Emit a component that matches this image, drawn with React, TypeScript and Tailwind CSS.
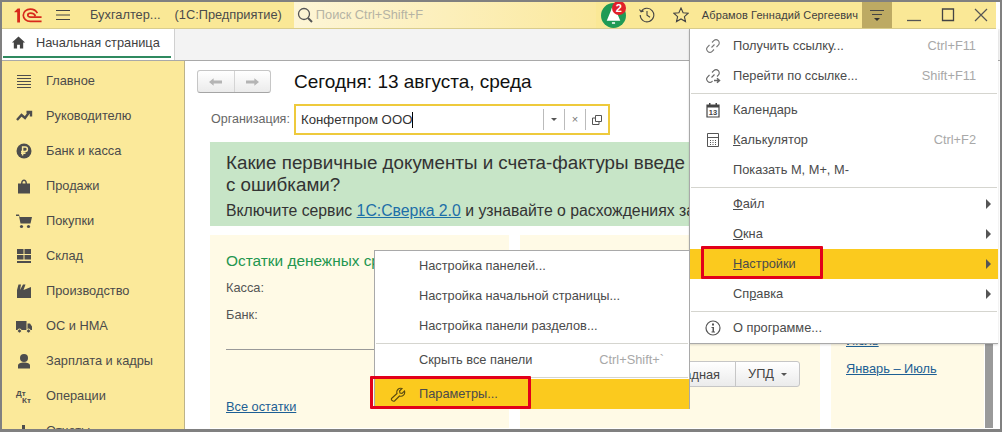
import type { ReactNode } from "react";

const sections = [
  "Главное",
  "Руководителю",
  "Банк и касса",
  "Продажи",
  "Покупки",
  "Склад",
  "Производство",
  "ОС и НМА",
  "Зарплата и кадры",
  "Операции",
  "Отчеты",
];

function SectionIcon({ index }: { index: number }) {
  const c = "#4d4d4d";
  const icons: ReactNode[] = [
    <g stroke={c} strokeWidth="1" fill="none">
      <path d="M1 2.500h14M1 5.500h14M1 8.500h14M1 11.500h14M1 14.500h14" />
    </g>,
    <path d="M1 12l4.500-5 3.500 3 4-5.500M10.500 4h4.500v4.500" stroke={c} strokeWidth="2.400" fill="none" />,
    <g>
      <circle cx="8" cy="8" r="7.500" fill={c} />
      <path d="M6.600 12.500V4h2.600a2.100 2.100 0 010 4.400H5M5 10.300h4.500" stroke="#fbe99a" strokeWidth="1.500" fill="none" />
    </g>,
    <path d="M2 5.500h3c0-5.500 6-5.500 6 0h3v10H2zM6.500 5.500h3c0-3.200-3-3.200-3 0z" fill={c} fillRule="evenodd" />,
    <g fill={c}>
      <path d="M0 1.500h3l.7 2.500H16l-1.500 6.500H4.500L3 3H0z" />
      <circle cx="5.500" cy="13.500" r="1.600" />
      <circle cx="12.500" cy="13.500" r="1.600" />
    </g>,
    <g fill={c}>
      <path d="M1 1h6.500v5H1zM8.500 1H15v5H8.500zM1 7h6.500v4.500H1zM8.500 7H15v4.500H8.500zM1 13h14v2H1z" />
    </g>,
    <path d="M1 15V7l1.500-5.500H5L4 7l3-5.500h2.500L7.500 7 15 4v11z" fill={c} />,
    <g fill={c}>
      <path d="M0 3h10.500v9H0zM11.500 5.500H14l2 3V12h-4.500z" />
      <circle cx="3.500" cy="13" r="2" stroke="#fbe99a" />
      <circle cx="12.500" cy="13" r="2" stroke="#fbe99a" />
    </g>,
    <g fill={c}>
      <circle cx="8" cy="5" r="4" />
      <path d="M2 15.500v-3c0-2 2.500-3 6-3s6 1 6 3v3z" />
    </g>,
    <g fill={c} fontFamily="'Liberation Sans', sans-serif" fontSize="8" fontWeight="700">
      <text x="0" y="8">Дт</text>
      <text x="6" y="15">Кт</text>
    </g>,
    <path d="M1 15V8h3v7zM6 15V2h3v13zM11 15V6h3v9z" fill={c} />,
  ];
  return (
    <svg viewBox="0 0 16 16" className="w-4 h-4 shrink-0 overflow-visible">
      {icons[index]}
    </svg>
  );
}

function Row({
  icon,
  label,
  hint,
  arrow,
  active,
  pad,
}: {
  icon?: ReactNode;
  label: ReactNode;
  hint?: string;
  arrow?: boolean;
  active?: boolean;
  pad: string;
}) {
  return (
    <div className={`relative h-[30px] flex items-center ${pad} ${active ? "bg-[#fbca1e]" : ""}`}>
      {icon && <span className="absolute left-[15px] top-[7px] w-4 h-4">{icon}</span>}
      <span className="text-[#4b4b4b]">{label}</span>
      {hint && <span className="ml-auto text-[#a8a8a8]">{hint}</span>}
      {arrow && <span className="absolute right-[7px] top-[10px] w-0 h-0 border-y-[5px] border-y-transparent border-l-[5px] border-l-[#555]" />}
    </div>
  );
}

const Sep = () => <div className="h-[1px] mx-[1px] my-[1.5px] bg-[#d5d5cf]" />;

export default function App() {
  return (
    <div className="relative w-[1002px] h-[432px] overflow-hidden border-2 border-b-[3px] border-[#808080] bg-white text-[12.8px] flex flex-col font-['Liberation_Sans',Arial,sans-serif]">
      {/* top bar */}
      <div className="h-[27px] mr-[4px] shrink-0 flex items-center bg-[#fae896] border-b border-[#d9cd8e] text-[#4b4b4b]">
        <svg viewBox="0 0 30 16" className="w-[29px] h-[15px] ml-[11px] shrink-0">
          <path d="M1 4l3.500-3.500h2.500v15H4V4.500H1z" fill="#d8291c" />
          <path d="M25.500 5.500C24 2.500 21 1.200 18 1.200c-4.200 0-7.500 2.700-7.500 6.400s3.300 6.600 7.500 6.600h12" stroke="#d8291c" strokeWidth="1.800" fill="none" />
          <path d="M23.500 8.500c-1-1.800-3-3-5-3-1.700 0-3.200 .8-3.200 2.100s1.500 2.100 3.200 2.100h11.500" stroke="#d8291c" strokeWidth="1.800" fill="none" />
        </svg>
        <svg viewBox="0 0 14 12" className="w-[14px] h-[12px] ml-[14px] shrink-0" fill="none">
          <path d="M0 1.500h14M0 6h14M0 10.500h14" stroke="#444" />
        </svg>
        <span className="ml-[20px]">Бухгалтер...</span>
        <span className="ml-[14px]">(1С:Предприятие)</span>
        <div className="ml-[12px] w-[302px] h-[26px] flex items-center bg-gradient-to-r from-[#fdf5d6] to-[#fbe99e]">
          <svg viewBox="0 0 16 16" className="w-4 h-4 ml-[3px] shrink-0" fill="none" stroke="#555" strokeWidth="1.300">
            <circle cx="7" cy="7" r="5.500" />
            <path d="M11 11l4 4" strokeWidth="2" />
          </svg>
          <span className="ml-[3px] text-[#b5b3a4]">Поиск Ctrl+Shift+F</span>
        </div>
        <div className="relative ml-[5px] w-[25px] h-[25px] rounded-full bg-[#1f9a55] shrink-0">
          <svg viewBox="0 0 24 24" className="w-[25px] h-[25px]">
            <path d="M12 4c-1.500 0-2 1-2.300 3L5.500 17h13L14.300 7C14 5 13.500 4 12 4zM10.500 18.500h3V20h-3z" fill="#fff" />
          </svg>
          <span className="absolute -top-[2px] left-[11px] w-[14px] h-[14px] rounded-full bg-[#e0202a] text-white text-[11px] font-bold leading-[14px] text-center">2</span>
        </div>
        <svg viewBox="0 0 16 16" className="w-4 h-4 ml-[13px] shrink-0" fill="none" stroke="#444" strokeWidth="1.100">
          <path d="M2.200 4.500A6.800 6.800 0 111.200 8M.5 2.500l1.600 2.300 2.600-.8M8 4v4.300l3 2" />
        </svg>
        <svg viewBox="0 0 16 16" className="w-4 h-4 ml-[18px] shrink-0" fill="none" stroke="#444" strokeWidth="1.100">
          <path d="M8 1l2.100 4.700 5.100.5-3.800 3.400 1.100 5L8 12l-4.500 2.600 1.100-5L.8 6.200l5.100-.5z" />
        </svg>
        <span className="ml-[13px] w-[155px] shrink-0 text-[11px] tracking-[0.1px] text-[#3f3f3f] whitespace-nowrap">Абрамов Геннадий Сергеевич</span>
        <div className="ml-[5px] w-[30px] h-[26px] bg-[#bdaa63] flex items-center justify-center shrink-0">
          <svg viewBox="0 0 16 16" className="w-4 h-4">
            <path d="M1 3.500h14M3 7.500h10" stroke="#444" />
            <path d="M5 11h6l-3 3z" fill="#333" />
          </svg>
        </div>
        <svg viewBox="0 0 16 16" className="w-4 h-4 ml-[14px] shrink-0"><path d="M1 13.500h14" stroke="#555" strokeWidth="1.300" /></svg>
        <svg viewBox="0 0 16 16" className="w-4 h-4 ml-[18px] shrink-0"><path d="M2.500 2h11v11.500h-11z" stroke="#444" strokeWidth="1.300" fill="none" /></svg>
        <svg viewBox="0 0 16 16" className="w-4 h-4 ml-[17px] shrink-0"><path d="M2 2l12 12M14 2L2 14" stroke="#555" strokeWidth="1.200" /></svg>
      </div>

      {/* tabs */}
      <div className="h-[32px] shrink-0 flex bg-[#f3f3f3] border-b border-[#a9a9a9]">
        <div className="w-[173px] h-[31px] bg-white border-r border-[#d0d0d0] flex items-center pb-[4px] relative text-[#3f3f3f]">
          <svg viewBox="0 0 16 16" className="w-[15px] h-[15px] ml-[9px] shrink-0">
            <path d="M8 1.500L1 8h2v6.500h3.500v-4h3v4H13V8h2z" fill="#444" />
          </svg>
          <span className="ml-[10px]">Начальная страница</span>
          <span className="absolute left-[1px] right-[3px] bottom-[2px] h-[2px] bg-[#2f8a60]" />
        </div>
      </div>

      {/* body */}
      <div className="flex-1 flex min-h-0">
        <div className="w-[183px] shrink-0 bg-[#fbe99a] border-r border-[#bdb38a] overflow-hidden pt-[2px]">
          {sections.map((s, i) => (
            <div key={s} className="h-[35px] flex items-center pl-[14px] text-[#4b4b4b]">
              <SectionIcon index={i} />
              <span className="ml-[14px]">{s}</span>
            </div>
          ))}
        </div>

        <div className="flex-1 min-w-0 overflow-hidden pl-[12px] pt-[9px]">
          <div className="flex items-center h-[23px]">
            <div className="w-[74px] h-[23px] flex rounded-[3px] border border-[#c6c6c6] border-b-[#a5a5a5] bg-gradient-to-b from-white to-[#ebebeb]">
              <div className="flex-1 flex items-center justify-center border-r border-[#d4d4d4]">
                <svg viewBox="0 0 14 10" className="w-[13px] h-[10px]"><path d="M0 5l5-4v2.500h9v3H5V9z" fill="#b4b4b4" /></svg>
              </div>
              <div className="flex-1 flex items-center justify-center">
                <svg viewBox="0 0 14 10" className="w-[13px] h-[10px]"><path d="M14 5L9 1v2.500H0v3h9V9z" fill="#b4b4b4" /></svg>
              </div>
            </div>
            <span className="ml-[23px] text-[19px] text-[#111] relative top-[1px]">Сегодня: 13 августа, среда</span>
          </div>
          <div className="flex items-center mt-[11px] pl-[14px] h-[31px]">
            <span className="text-[#666] w-[83px] shrink-0 text-[12.500px]">Организация:</span>
            <div className="w-[316px] h-[31px] border-2 border-[#eeca3c] flex items-center text-[#333] text-[13.200px]">
              <span className="pl-[5px]">Конфетпром ООО</span>
              <span className="w-[1px] h-[16px] bg-black" />
              <div className="ml-auto flex h-[21px] text-[#777]">
                <div className="w-[21px] border-l border-[#bbb] flex items-center justify-center">
                  <span className="w-0 h-0 border-x-[3px] border-x-transparent border-t-[3px] border-t-[#555]" />
                </div>
                <div className="w-[21px] border-l border-[#bbb] flex items-center justify-center text-[11px]">×</div>
                <div className="w-[23px] border-l border-[#bbb] flex items-center justify-center">
                  <svg viewBox="0 0 10 10" className="w-[10px] h-[10px]" fill="none" stroke="#555">
                    <path d="M3.500.5h6v6h-6zM3.500 3H.5v6.500H7V6.500" />
                  </svg>
                </div>
              </div>
            </div>
          </div>
          <div className="mt-[7px] ml-[13px] w-[479px] h-[84px] overflow-hidden bg-[#c7e5c7] pl-[16px] pt-[10px] text-[#333]">
            <div className="text-[18.800px] leading-[22px] whitespace-nowrap">Какие первичные документы и счета-фактуры введе</div>
            <div className="text-[18.800px] leading-[22px]">с ошибками?</div>
            <div className="text-[15.800px] leading-[20px] mt-[5px] whitespace-nowrap">
              Включите сервис <span className="text-[#1d6fa8] underline">1С:Сверка 2.0</span> и узнавайте о расхождениях за
            </div>
          </div>
          <div className="mt-[9px] ml-[13px] flex gap-[11px] h-[193px]">
            <div className="w-[299px] shrink-0 bg-[#fffae6] pl-[16px] pt-[14px] overflow-hidden">
              <div className="text-[15.400px] text-[#23964f] whitespace-nowrap">Остатки денежных ср</div>
              <div className="mt-[6px] text-[#555]">Касса:</div>
              <div className="mt-[8px] text-[#555]">Банк:</div>
              <div className="mt-[25px] h-[1px] bg-[#999]" />
              <div className="mt-[47px] text-[#1d5f94] underline">Все остатки</div>
            </div>
            <div className="w-[300px] shrink-0 bg-[#fffae6] pt-[126px] flex justify-end pr-[20px]">
              <div className="h-[26px] flex border border-[#c6c6c6] rounded-[3px] bg-gradient-to-b from-white to-[#ebebeb] text-[#444]">
                <span className="pl-[1px] pr-[15px] leading-[26px]">адная</span>
                <span className="px-[12px] leading-[26px] border-l border-[#c6c6c6] flex items-center gap-[7px]">
                  УПД
                  <span className="w-0 h-0 border-x-[3px] border-x-transparent border-t-[3px] border-t-[#555]" />
                </span>
              </div>
            </div>
            <div className="w-[153px] shrink-0 bg-[#fffae6] pl-[15px] pt-[96px] text-[#1d5f94]">
              <div className="underline">Июль</div>
              <div className="underline mt-[9px]">Январь – Июль</div>
            </div>
            <div className="w-[8px] shrink-0 bg-[#9a9a9a] -ml-[10px]" />
          </div>
        </div>
      </div>

      {/* main menu */}
      <div className="absolute left-[687px] top-[27px] w-[309px] h-[315px] bg-white border-l border-b border-[#a9a9a9] pt-[2px] shadow-[0_1px_2px_rgba(0,0,0,0.15)]">
        <Row
          pad="pl-[43px] pr-[22px]"
          label="Получить ссылку..."
          hint="Ctrl+F11"
          icon={
            <svg viewBox="0 0 16 16" fill="none" stroke="#777" strokeWidth="1.100" className="w-4 h-4">
              <path d="M6.500 9.500l3-3M7 4.500l1.800-1.800a3 3 0 014.500 4.500L11.500 9M9 11.500l-1.800 1.800a3 3 0 01-4.500-4.500L4.500 7" />
            </svg>
          }
        />
        <Row
          pad="pl-[43px] pr-[22px]"
          label="Перейти по ссылке..."
          hint="Shift+F11"
          icon={
            <svg viewBox="0 0 16 16" fill="none" stroke="#666" strokeWidth="1.100" className="w-4 h-4">
              <path d="M6.500 9.500l3-3M7 4.500l1.800-1.800a3 3 0 014.500 4.500L12 8.500M7.500 13l-.3.300a3 3 0 01-4.500-4.500L4.500 7" />
              <path d="M9 12.500h5M12 10.200l2.500 2.300-2.500 2.300" strokeWidth="1.500" />
            </svg>
          }
        />
        <Sep />
        <Row
          pad="pl-[43px] pr-[22px]"
          label={<span>Кален<span className="underline">д</span>арь</span>}
          icon={
            <svg viewBox="0 0 16 16" className="w-4 h-4">
              <path d="M2 3h12v12H2z" fill="none" stroke="#444" strokeWidth="1.200" />
              <path d="M2 3h12v2.500H2zM4 1h1.500v2H4zM10.500 1H12v2h-1.500z" fill="#444" />
              <text x="8" y="13" textAnchor="middle" fontSize="7.500" fontWeight="700" fill="#444" fontFamily="'Liberation Sans', sans-serif">13</text>
            </svg>
          }
        />
        <Row
          pad="pl-[43px] pr-[22px]"
          label={<span><span className="underline">К</span>алькулятор</span>}
          hint="Ctrl+F2"
          icon={
            <svg viewBox="0 0 16 16" className="w-4 h-4">
              <path d="M2.500 1.500h11v13h-11zM2.500 5.500h11" fill="none" stroke="#555" />
              <path d="M5 8h1v1H5zM7.500 8h1v1h-1zM10 8h1v1h-1zM5 10h1v1H5zM7.500 10h1v1h-1zM10 10h1v1h-1zM5 12h1v1H5zM7.500 12h1v1h-1zM10 12h1v1h-1z" fill="#555" />
            </svg>
          }
        />
        <Row pad="pl-[43px] pr-[22px]" label="Показать М, М+, М-" />
        <Sep />
        <Row pad="pl-[43px] pr-[22px]" arrow label={<span><span className="underline">Ф</span>айл</span>} />
        <Row pad="pl-[43px] pr-[22px]" arrow label={<span><span className="underline">О</span>кна</span>} />
        <Row pad="pl-[43px] pr-[22px]" arrow active label={<span><span className="underline">Н</span>астройки</span>} />
        <Row pad="pl-[43px] pr-[22px]" arrow label={<span>Сп<span className="underline">р</span>авка</span>} />
        <Sep />
        <Row
          pad="pl-[43px] pr-[22px]"
          label="О программе..."
          icon={
            <svg viewBox="0 0 16 16" className="w-4 h-4">
              <circle cx="8" cy="8" r="7" fill="none" stroke="#555" strokeWidth="1.200" />
              <path d="M7 3.500h2v2H7zM6.500 7H9v4.500h1v1H6.500v-1h1V8h-1z" fill="#555" />
            </svg>
          }
        />
      </div>

      {/* context menu */}
      <div className="absolute left-[372px] top-[248px] w-[316px] h-[159px] bg-white border border-[#a9a9a9]">
        <Row pad="pl-[44px] pr-[25px]" label="Настройка панелей..." />
        <Row pad="pl-[44px] pr-[25px]" label="Настройка начальной страницы..." />
        <Row pad="pl-[44px] pr-[25px]" label="Настройка панели разделов..." />
        <Sep />
        <Row pad="pl-[44px] pr-[25px]" label="Скрыть все панели" hint="Ctrl+Shift+`" />
        <Sep />
        <Row
          pad="pl-[44px] pr-[25px]"
          active
          label="Параметры..."
          icon={
            <svg viewBox="0 0 16 16" fill="none" stroke="#5a4a10" strokeWidth="1.100" className="w-4 h-4">
              <path d="M1.500 12.500L7 7.500c-1-3 1.500-6 5-5l-2.500 2.500.5 2 2 .5L14.500 5c1 3.500-2 6-5 5l-5 5c-1.300 1-3.700-1-3-2.500z" />
            </svg>
          }
        />
      </div>

      {/* red call-outs */}
      <div className="absolute left-[699px] top-[244px] w-[122px] h-[33px] border-[3px] border-[#e2001a] rounded-[1px]" />
      <div className="absolute left-[368px] top-[374px] w-[161px] h-[33px] border-[3px] border-[#e2001a] rounded-[1px]" />
    </div>
  );
}
